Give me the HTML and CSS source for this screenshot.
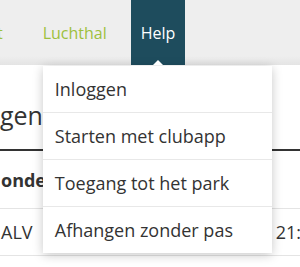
FILE: index.html
```html
<!DOCTYPE html>
<html>
<head>
<meta charset="utf-8">
<link rel="stylesheet" href="styles.css">
</head>
<body>
<div class="nav">
  <div class="nav-item partial">t</div>
  <div class="nav-item">Luchthal</div>
  <div class="nav-item active">Help<span class="caret"></span>
    <div class="dropdown">
      <div class="dd-item">Inloggen</div>
      <div class="dd-item">Starten met clubapp</div>
      <div class="dd-item">Toegang tot het park</div>
      <div class="dd-item">Afhangen zonder pas</div>
    </div>
  </div>
</div>
<div class="page">
  <h1 class="title">gen</h1>
  <div class="table">
    <div class="row head"><span class="c1">onde</span><span class="c2"></span></div>
    <div class="row"><span class="c1">ALV</span><span class="c2">21:</span></div>
    <div class="row empty"></div>
  </div>
</div>
</body>
</html>
```
FILE: styles.css
```css
html, body {
  margin: 0;
  padding: 0;
}
body {
  width: 300px;
  height: 267px;
  overflow: hidden;
  background: #fff;
  font-family: "Open Sans", "DejaVu Sans", sans-serif;
  color: #333;
}
.nav {
  height: 65px;
  background: linear-gradient(#eeeeee 0, #eeeeee 56px, #e4e4e4 65px);
  display: flex;
  align-items: stretch;
}
.nav-item {
  display: flex;
  align-items: center;
  font-size: 16px;
  color: #9dc03d;
  padding: 0 10px;
  position: relative;
}
.nav-item.partial {
  margin-left: -13px;
  margin-right: 20px;
}
.nav-item.active {
  background: #1e4c5d;
  color: #fff;
  margin-left: 14px;
  padding: 0 10px;
}
.caret {
  position: absolute;
  left: 50%;
  bottom: 0;
  margin-left: -5px;
  width: 0;
  height: 0;
  border-left: 5px solid transparent;
  border-right: 5px solid transparent;
  border-bottom: 5px solid #fff;
  z-index: 3;
}
.dropdown {
  position: absolute;
  top: 66px;
  left: -88px;
  width: 229px;
  background: #fff;
  box-shadow: 0 2px 10px rgba(0,0,0,0.22);
  z-index: 2;
}
.dd-item {
  font-size: 18px;
  color: #333;
  line-height: 26px;
  padding: 10px 12px;
  border-top: 1px solid #e8e8e8;
  white-space: nowrap;
}
.dd-item:first-child {
  border-top: none;
}
.page {
  padding-top: 30px;
}
.title {
  margin: 0;
  font-size: 25px;
  font-weight: normal;
  line-height: 40px;
  padding-bottom: 14px;
  border-bottom: 2px solid #333;
}
.row {
  display: flex;
  justify-content: space-between;
  border-bottom: 1px solid #e4e4e4;
  height: 46px;
  align-items: center;
  font-size: 18px;
}
.row.head {
  font-weight: bold;
  height: 57px;
}
.row .c1 {
  padding-left: 1px;
}
.row .c2 {
  margin-right: -1px;
}
```
